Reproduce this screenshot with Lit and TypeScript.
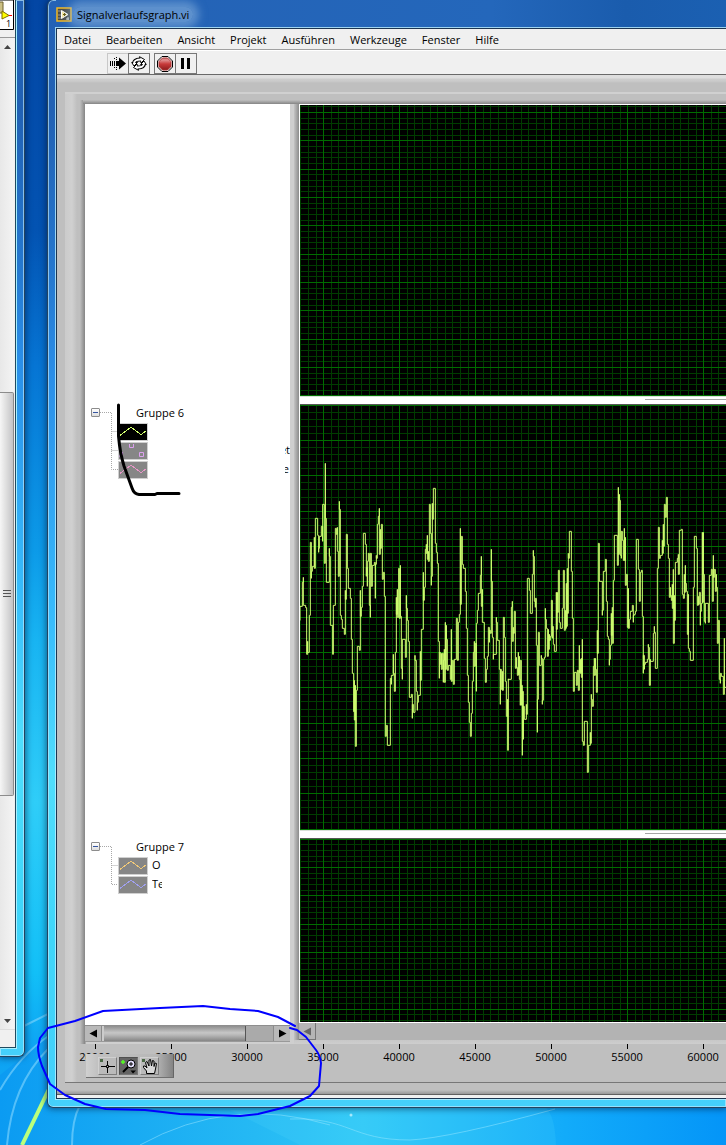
import { LitElement, html, svg, css } from "lit";
import { customElement, property } from "lit/decorators.js";

const MENU = ["Datei", "Bearbeiten", "Ansicht", "Projekt", "Ausführen", "Werkzeuge", "Fenster", "Hilfe"];
const TICKS = [20000, 25000, 30000, 35000, 40000, 45000, 50000, 55000, 60000];

// Sampled signal as stair steps, drawn at three units per pixel.
const TRACE_A =
  "M12 540V499H19V427H22V412V496H29V503H32V643H35V604V637H40V526H43V307H46V415V394H49V379H55V292V385H58V235H65V286H68V337V325H70V289H76V259H80V304V193H85V370H88V70V235H91V427H100V325V349H103V556H110V643H112V496H118V265H121V283H124V262V334H127V409H130V184V208H133V526H136V538H139V565H145V583H148V451V478H151V283H154V385H157V445H163V475H166V598H169V700H173V815H175V721V840H178V736V919H181V751H184V619H190V631H193V451V529H196V502H199V439H202V280H208V313H211V409V382H214V439V364H217V340H220V496H223V532V340H226V439H229V376H235V367H238V475V373H241V346V355H244V253H247V229H250V205V343H253V268V325H256V253H259V418H262V397H265V469H268V889H271V856H274V916H283V715H286V733V706H292V643V700H295V754H298V637H301V472V523H304V448V532H308V385H310V535H313V376V529H316V685H319V718V598H328V652H331V466V505H334V541H337V604H340V772H346V763H349V835V793H352V817H357V646V661H361V754H364V811V787H367V766H373V634V721H376V568H382V397V481H385V442H388V328H391V313V340H394V286V358H397V334V364H400V193H403V280H406V436V409H409V190V238H412V145H418V310H421V337H424V370H427V604H430V715V637H433V673H436V640V688H439V640H442V727V661H445V628V727H448V547V688H451V556V598H454V691H457V676H463V718H466V568V724H469V661H472V733H475V658H481V535H484V661H487V547H490V523H493V265V493H496V289H499V373H502V385H508V454H511V565H514V706H517V787H520V847H523V889H526V820H529V724H532V637H535V604V679H538V610H541V754V550H544V511H547V460H553V406H556V349V499H559V448V547H565V655H568V727H571V688H574V649H577V562H580V607V571H583V580H586V328V424H589V592H592V658V643H601V532V547H604V601H610V688H613V793V688H616V748H619V694V751H622V532H625V592H628V724H631V829H635V778V931H637V718";
const TRACE_B =
  "M7 718H16V502H19V484V604H22V562V580H25V514H28V685H31V652V682H34V706H37V637V703H40V649V718H43V796V661H46V796V736H49V946V754H52V898V799H55V838H61V793V823H64V415H70V451H73V520H79V403H82V331V349H85V484H88V502V475H91V616H94V877V778H97V577H100V676H106V646V655H109V793V781H112V658H115V652H118V505V538H121V565H124V649H127V568V628H130V583V601H133V589H136V481H139V595V559H142V613H145V634H151V457V568H154V457V517H157V391H160V547H163V565H169V505H172V391H175V571H178V511V565H181V430V559H184V385V520H187V340V355H190V274H196V394H199V535H202V754H205V697H211V736H214V691H217V751H220V616V697H223V658V700H226V655V712H229V598V904H232V916H235V844H244V997H247V916H253V877V910H256V763V778H259V799H262V679H265V655V706H268V655V688H271V757H274V571V640H277V310H280V424H289V526V511H292V394H298V358H301V484H304V589H307V598H310V676V658H313V616H316V520V586H319V502V610H322V421H325V286H334V376H337V142V343H340V163V181H343V346H346V355V274H349V301H352V361H355V265V361H358V292V436H361V403H364V562H367V445V565H370V538H373V514H379V496H382V547V526H385V523H388V514H391V298H397V388H400V484H403V397H406V391H409V529H412V700V646H415V688V673H418V667H424V658H427V613V622H430V736H433V658V664H442V580H445V559V577H448V685H454V385H457V262H460V355H463V346H469V301V340H472V253V319H475V193H478V232H481V172H484V313H487V355H490V472H493V442V466H496V481H499V433V505H502V388V610H505V466V541H508V367H514V355H517V343V403H520V271H526V268H529V463H532V475H535V403V457H538V376V430H541V454H544V583H547V463V625H550V634H553V661H562V442H565V289H571V325H574V496H577V469V493H580V457H583V556V514H586V490H589V277V487H592V277V403H595V544H598V550V490H607V547H610V406H616V388H619V484H622V346V412H625V388H628V454H631V403V442H634V610H637V541H640V718H643V730V700H646V709H652V763H655V595V742H660";

@customElement("plot-grid")
export class PlotGrid extends LitElement {
  @property({ type: Number }) offset = 7;
  @property({ type: Number }) major = 28.33;
  @property({ type: Boolean }) signal = false;

  static styles = css`
    :host { display: block; background: #000; overflow: hidden; min-height: 0; }
    .grid { display: block; width: 100%; height: 100%; shape-rendering: crispEdges; }
    .minor { stroke: #003c00; stroke-width: 1; fill: none; }
    .major { stroke: #006c00; stroke-width: 1; fill: none; }
    .trace { stroke: #d2ff70; stroke-width: 3; fill: none; stroke-linecap: square; }
  `;

  render() {
    let minor = "";
    let major = "";
    for (let k = -3; k < 320; k++) {
      const x = Math.ceil(23 + k * 7.6 - 0.3) + 0.5;
      if (k % 10 === 0) major += `M${x} 0V2000`;
      else minor += `M${x} 0V2000`;
    }
    for (let k = -5; k < 250; k++) {
      const y = Math.round(this.offset + (k * this.major) / 5) + 0.5;
      if (y < 0) continue;
      if (k % 5 === 0) major += `M0 ${y}H2600`;
      else minor += `M0 ${y}H2600`;
    }
    return html`<svg class="grid" aria-hidden="true">
      <path class="minor" d=${minor}></path>
      <path class="major" d=${major}></path>
      ${this.signal
        ? svg`<g transform="translate(-4 35) scale(.33333)"><path class="trace" d=${TRACE_A}/></g>
              <g transform="translate(206 35) scale(.33333)"><path class="trace" d=${TRACE_B}/></g>`
        : null}
    </svg>`;
  }
}

@customElement("app-root")
export class AppRoot extends LitElement {
  static styles = css`
    :host { display: block; font: 11px/15px "Open Sans", "Noto Sans", sans-serif; color: #000; }
    * { box-sizing: border-box; }
    button { font: inherit; color: inherit; margin: 0; padding: 0; border: 0; background: none; border-radius: 0; display: block; }
    svg { display: block; }
    .desktop {
      position: relative; min-height: 100vh; height: 100vh; overflow: hidden; display: flex; gap: 22px;
      background: linear-gradient(#0346a4 0, #0353b2 20%, #0675d4 32%, #0c9ae8 48%, #18b4f2 56%, #2fcdf8 70%, #12bff7 85%, #0da2f3 92%, #12aef4 100%);
    }
    .wallpaper { position: absolute; left: 0; bottom: 0; width: 100%; height: 200px; }
    .glass {
      position: relative; border: 1px solid #24435f;
      background: linear-gradient(#2462b6 0, #2161b4 10%, #2578cf 25%, #2a8ee8 34%, #38bcfc 56%, #50defd 70%, #3fd6fa 85%, #45d0fb 100%);
      box-shadow: 0 0 6px 1px rgba(0, 20, 50, .55), inset 0 0 0 1px rgba(190, 235, 255, .65);
    }
    .other { width: 25px; margin-bottom: 88px; border-left: 0; border-top: 0; border-radius: 0 0 6px 0; padding: 0 8px 8px 0; display: flex; }
    .other-body { flex: 1; display: flex; flex-direction: column; background: #f0f0f0; border: solid #1f4a60; border-width: 0 1px 1px 0; box-shadow: 1px 1px 0 #a8f0ff; overflow: hidden; }
    .conn { height: 38px; border-bottom: 1px solid #999; }
    .vscroll { flex: 1; width: 14px; min-height: 0; display: flex; flex-direction: column; align-items: stretch; background: linear-gradient(90deg, #e8e8e8, #f4f4f4); }
    .vstep { height: 17px; display: grid; place-items: center; }
    .vpad { flex: 338; }
    .vthumb { flex: 404; border: 1px solid #8c8c8c; border-left: 0; border-radius: 0 2px 2px 0; background: linear-gradient(90deg, #f6f6f6, #ddd 50%, #c3c3c6); display: grid; place-items: center; }
    .vpad2 { flex: 217; }
    .foot { height: 18px; border-top: 1px solid #ddd; }

    .window { flex: 1; min-width: 0; margin-bottom: 37px; border-top: 0; border-right: 0; border-radius: 6px 0 0 6px; padding: 0 0 8px 8px; display: flex; flex-direction: column; }
    .title { height: 28px; display: flex; align-items: center; gap: 5px; background: linear-gradient(90deg, #2462b5, #2467bb 65%, #1a5cad 85%, #1b60b2); }
    .title-text { padding: 0 4px; margin: 0 -4px; font-size: 11px; font-weight: 400; background: rgba(150, 190, 228, .5); border-radius: 8px; box-shadow: 0 0 8px 6px rgba(150, 190, 228, .5); }
    .client { flex: 1; min-height: 0; display: flex; flex-direction: column; border: solid #1c3550; border-width: 1px 0 1px 1px; background: #f0f0f0; box-shadow: 0 0 0 1px rgba(190, 240, 255, .8); overflow: hidden; }
    .menu { display: flex; gap: 15px; height: 21px; padding: 0 7px; align-items: center; border-bottom: 1px solid #a0a0a0; }
    .tools { display: flex; height: 25px; padding: 2px 0 0 51px; border-top: 1px solid #fff; border-bottom: 1px solid #696969; }
    .tool { width: 22px; height: 21px; border: 1px solid #777; display: grid; place-items: center; margin-left: -1px; }
    .tool.plain { border-color: #c8c8c8; border-right: 0; }
    .tool.first { margin-left: 4px; }
    .face { flex: 1; min-height: 0; display: flex; padding: 17px 0 11px 8px; background: linear-gradient(#dedede 0, #dedede 3px, #cdcdcd 4px, #cbcbcb 6px, #bfbfbf 8px, #bfbfbf calc(100% - 4px), #989898); border-bottom: 1px solid #606060; }
    .plate { flex: 1; min-width: 0; position: relative; display: flex; flex-direction: column; border-bottom: 1px solid #777;
      background: linear-gradient(#d0d0d0, #d0d0d0) 0 0 / 100% 2px no-repeat, linear-gradient(90deg, #cbcbcb 0, #d0d0d0 7px, #bfbfbf 12px); }
    .body { flex: 1; min-height: 0; margin: 8px 0 0 15px; display: grid; grid-template-columns: 214px 1fr; }
    .tree-frame { display: flex; flex-direction: column; padding: 4px 4px 2px 5px;
      background: linear-gradient(#bfbfbf, #858585 4px, transparent 4px) 3px 0 no-repeat, linear-gradient(90deg, #bfbfbf, #858585 5px, #cfcfcf 6px, #cfcfcf); }
    .tree { flex: 1; min-height: 0; display: grid; grid-template-rows: 300fr 434fr 187fr; background: #fff; }
    .group { grid-column: 1; position: relative; padding: 0 0 0 6px; overflow: hidden; }
    .six { grid-row: 2; }
    .seven { grid-row: 3; }
    .head { display: flex; align-items: center; height: 16px; gap: 36px; }
    .expand { width: 9px; height: 9px; border: 1px solid #8c8c8c; background: linear-gradient(#fff, #ddd); display: grid; place-items: center; border-radius: 1px; }
    .entries { display: flex; flex-direction: column; gap: 1px; padding: 3px 0 0 27px; }
    .entry { display: flex; align-items: center; gap: 4px; height: 18px; }
    .swatch { width: 30px; height: 18px; border: 1px solid #d0d0d0; background: #868686; }
    .swatch.dark { background: #000; }
    .frag { height: 15px; overflow: hidden; margin-top: -3px; }
    .cut { width: 10px; }
    .tail { width: 5px; margin-left: auto; display: flex; justify-content: flex-end; }
    .tail.end { width: 4px; margin-right: 1px; }
    .lines { position: absolute; left: 15px; top: 8px; }
    .hscroll { height: 17px; display: flex; background: #b4b4b4; border-top: 1px solid #8e8e8e; border-bottom: 1px solid #999; }
    .hstep { width: 17px; display: grid; place-items: center; background: #b9b9b9; border: solid #8b8b8b; border-width: 0 1px 0 0; }
    .hstep.right { border-width: 0 0 0 1px; }
    .hthumb { flex: 1; background: linear-gradient(#8e8e8e, #c6c6c6 45%, #b8b8b8 60%, #858585); border: solid #ccc; border-width: 0 0 0 2px; border-right: 1px solid #555; }
    .htrough { width: 27px; background: #aaa; }
    .graph { display: flex; flex-direction: column; min-width: 0; padding: 4px 0 4px 5px;
      background: linear-gradient(#c8c8c8, #cecece) 0 100% / 100% 4px no-repeat, linear-gradient(#bfbfbf, #858585 4px, transparent 4px), linear-gradient(90deg, #c4c4c4, #adadad 2px, #8c8c8c 5px); }
    .plots { flex: 1; min-height: 0; display: grid; grid-template-rows: 300fr 434fr 185fr; border: solid #fff; border-width: 0 0 0 1px; }
    .plot { display: flex; flex-direction: column; min-height: 0; min-width: 0; }
    .plot.top { border-top: 1px solid #fff; }
    .plot.next { border-top: 1px solid #555; }
    .plot.last { border-bottom: 1px solid #fff; }
    .plot > plot-grid { flex: 1; }
    .divider { height: 8px; background: #fff; border-top: 1px solid #d8e0d8; padding: 2px 0 0 345px; }
    .rule { height: 1px; background: #a6a6a6; }
    .gscroll { height: 17px; background: #b3b3b3; display: flex; }
    .gstep { width: 17px; display: grid; place-items: center; background: #b5b5b5; border: solid #777; border-width: 0 1px 1px 0; }
    .axis { display: flex; height: 38px; margin-left: -8px; overflow: hidden; }
    .tick { flex: 0 0 76px; display: flex; flex-direction: column; align-items: center; }
    .mark { width: 1px; height: 5px; background: #000; }
    .palette { position: absolute; left: 21px; bottom: 4px; width: 88px; height: 24px; padding: 3px 0 0 12px; display: flex; gap: 2px; border-bottom: 1px solid #707070; border-right: 1px solid #666; background: linear-gradient(90deg, #d0d0d0, #bfbfbf 15%, #b8b8b8 80%, #848484); }
    .pick { width: 19px; height: 18px; border: 1px solid #d0d0d0; border-right-color: #7d7d7d; border-bottom-color: #7d7d7d; background: #bababa; }
    .pick.on { background: #646464; border-color: #505050 #777 #777 #505050; }
    .strip { height: 3px; }
    .ink { position: absolute; left: 0; top: 0; width: 100%; height: 100%; pointer-events: none; }
  `;

  private zig(color: string) {
    return html`<svg width="28" height="16" fill="none" stroke=${color} shape-rendering="crispEdges" aria-hidden="true"><path d="M1 11.500L12 3L22 10.500L27 7"></path></svg>`;
  }

  private arrow(left: boolean, color = "#000") {
    return html`<svg width="9" height="9" fill=${color} aria-hidden="true"><path d=${left ? "M8 .5V8.500L.5 4.500Z" : "M1 .5V8.500L8.500 4.500Z"}></path></svg>`;
  }

  private head(name: string) {
    return html`<div class="head">
      <button class="expand" aria-label="${name} reduzieren"><svg width="7" height="7" stroke="#3555a0" aria-hidden="true"><path d="M1 3.500H6"></path></svg></button>
      <span>${name}</span>
    </div>`;
  }

  render() {
    return html`
      <div class="desktop">
        <svg class="wallpaper" viewBox="0 0 726 200" preserveAspectRatio="none" fill="none" aria-hidden="true">
          <defs>
            <linearGradient id="sky"><stop offset="0" stop-color="#0b9bf2"></stop><stop offset=".35" stop-color="#25b9f4"></stop><stop offset=".5" stop-color="#30c8f6"></stop><stop offset=".78" stop-color="#12abfa"></stop><stop offset="1" stop-color="#0495f8"></stop></linearGradient>
          </defs>
          <path d="M0 130L50 90H726V200H0Z" fill="url(#sky)"></path>
          <path d="M0 145Q20 110 50 90M7 200Q12 140 48 104M72 200Q72 175 80 160M22 82L58 64" stroke="#8fdcff" stroke-width="2" opacity=".55"></path>
          <path d="M22 200L50 142" stroke="#baff7c" stroke-width="4"></path>
          <path d="M140 200Q230 150 330 180M290 174C350 172 350 195 410 195Q450 193 555 164" stroke="#9fe8ff" opacity=".5"></path>
          <path d="M545 162Q555 170 556 200H300L230 165Z" fill="#6fe8ff" opacity=".12"></path>
          <circle cx="351" cy="170" r="1.500" fill="#a8ecff"></circle>
        </svg>

        <aside class="glass other">
          <div class="other-body">
            <div class="conn">
              <svg width="14" height="37" aria-hidden="true">
                <path d="M0 0H13.500V29.500H0" fill="#fff" stroke="#000"></path>
                <path d="M0 2H3V13H0" fill="#cbbf83" stroke="#6c602e"></path>
                <path d="M2 11L9 15.500L2 19Z" fill="#ff0" stroke="#806e00"></path>
                <path d="M9 15.500H12" stroke="#f00"></path>
                <text x="6" y="27" font-size="9">1</text>
              </svg>
            </div>
            <div class="vscroll">
              <button class="vstep" aria-label="Nach oben"><svg width="7" height="4" fill="#444"><path d="M0 4L3.500 0L7 4Z"></path></svg></button>
              <div class="vpad"></div>
              <div class="vthumb"><svg width="8" height="8" stroke="#555"><path d="M0 .5H8M0 3.500H8M0 6.500H8"></path></svg></div>
              <div class="vpad2"></div>
              <button class="vstep" aria-label="Nach unten"><svg width="7" height="4" fill="#444"><path d="M0 0L3.500 4L7 0Z"></path></svg></button>
            </div>
            <div class="foot"></div>
          </div>
        </aside>

        <main class="glass window">
          <header class="title">
            <svg width="16" height="15" aria-hidden="true">
              <rect x="1" y="1" width="14" height="13" fill="#4a4a44" stroke="#f4bb24" stroke-width="1.500"></rect>
              <path d="M2 4H5M2 8H5M2 11H5" stroke="#999"></path>
              <path d="M5.500 3.500L12 7.500L5.500 11.500Z" fill="#fbe9a0" stroke="#fff"></path>
              <path d="M7 7.500H10M8.500 6V9" stroke="#665500"></path>
              <path d="M10 12H13M12 10V13" stroke="#ddd"></path>
            </svg>
            <h1 class="title-text">Signalverlaufsgraph.vi</h1>
          </header>
          <div class="client">
            <nav class="menu">${MENU.map((m) => html`<button>${m}</button>`)}</nav>
            <div class="tools">
              <button class="tool plain" aria-label="Ausführen">
                <svg width="17" height="15"><path d="M.5 5V10M2.500 5V10M4.500 5V10" stroke="#000"></path><path d="M6 5H9V1.500L16 7.500L9 13.500V10H6Z"></path><path d="M6.500 1V4M6.500 11V14M4.500 2V4M4.500 11V13" stroke="#000" stroke-dasharray="1 1"></path></svg>
              </button>
              <button class="tool" aria-label="Wiederholt ausführen">
                <svg width="16" height="15" fill="none" stroke-linejoin="round">
                  <path d="M3 8C3 4.500 5 3.500 9 3.500M13 7C13 10.500 11 11.500 7 11.500" stroke="#000" stroke-width="4"></path>
                  <path d="M8.500 .7L13.500 3.500L10 7ZM7.500 14.300L2.500 11.500L6 8ZM.7 6.500H6.500L3 10ZM9.500 8.500L13 5L15.300 8.500Z" fill="#fff" stroke="#000"></path>
                  <path d="M3 8C3 4.500 5 3.500 10 3.500M13 7C13 10.500 11 11.500 6 11.500" stroke="#fff" stroke-width="2"></path>
                </svg>
              </button>
              <button class="tool first" aria-label="Abbrechen">
                <svg width="16" height="16"><defs><linearGradient id="stop" x2="0" y2="1"><stop offset=".2" stop-color="#dd8888"></stop><stop offset=".5" stop-color="#c83a3a"></stop><stop offset="1" stop-color="#8c1c1c"></stop></linearGradient></defs><path d="M5 .5H11L15.500 5V11L11 15.500H5L.5 11V5Z" fill="#fff" stroke="#000"></path><path d="M5.500 2H10.500L14 5.500V10.500L10.500 14H5.500L2 10.500V5.500Z" fill="url(#stop)" stroke="#a33"></path></svg>
              </button>
              <button class="tool" aria-label="Pause">
                <svg width="10" height="11"><path d="M0 0H3V11H0ZM6 0H9V11H6Z"></path></svg>
              </button>
            </div>

            <div class="face">
              <div class="plate">
                <div class="body">
                  <div class="tree-frame">
                    <div class="tree">
                      <section class="group six">
                        ${this.head("Gruppe 6")}
                        <svg class="lines" width="19" height="60" fill="none" stroke="#a8a8a8" stroke-dasharray="1 1"><path d="M0 .5H11.500V57.500H18M11.500 19.500H18M11.500 38.500H18"></path></svg>
                        <div class="entries">
                          <div class="entry"><span class="swatch dark">${this.zig("#d2ff70")}</span></div>
                          <div class="entry">
                            <span class="swatch"><svg width="28" height="16" fill="none" stroke="#dda0f0"><path d="M10.500 1V4.500H14.500V1M20.500 9.500H24.500V13.500H20.500ZM3.500 9V13H0"></path></svg></span>
                            <span class="frag tail">et</span>
                          </div>
                          <div class="entry"><span class="swatch">${this.zig("#e896c8")}</span><span class="frag tail end">e</span></div>
                        </div>
                      </section>
                      <section class="group seven">
                        ${this.head("Gruppe 7")}
                        <svg class="lines" width="19" height="42" fill="none" stroke="#a8a8a8" stroke-dasharray="1 1"><path d="M0 .5H11.500V38.500H18M11.500 19.500H18"></path></svg>
                        <div class="entries">
                          <div class="entry"><span class="swatch">${this.zig("#f0c878")}</span><span class="frag">O</span></div>
                          <div class="entry"><span class="swatch">${this.zig("#a0a0f0")}</span><span class="frag cut">Te</span></div>
                        </div>
                      </section>
                    </div>
                    <div class="hscroll">
                      <button class="hstep" aria-label="Nach links">${this.arrow(true)}</button>
                      <div class="hthumb"></div>
                      <div class="htrough"></div>
                      <button class="hstep right" aria-label="Nach rechts">${this.arrow(false)}</button>
                    </div>
                  </div>

                  <div class="graph">
                    <div class="plots">
                      <div class="plot top"><plot-grid .offset=${7}></plot-grid><div class="divider"><div class="rule"></div></div></div>
                      <div class="plot next"><plot-grid .offset=${35} .major=${35.33} signal></plot-grid><div class="divider"><div class="rule"></div></div></div>
                      <div class="plot next last"><plot-grid .offset=${28}></plot-grid></div>
                    </div>
                    <div class="gscroll"><button class="gstep" aria-label="Graph nach links">${this.arrow(true, "#666")}</button></div>
                  </div>
                </div>
                <div class="axis">
                  ${TICKS.map((t) => html`<div class="tick"><span class="mark"></span><span>${t}</span></div>`)}
                </div>
                <div class="palette">
                  <button class="pick" aria-label="Cursor"><svg width="17" height="16" fill="none" stroke="#000"><path d="M2 8.500H7M10 8.500H16M8.500 3V7M8.500 10V15M7.500 7.500H9.500V9.500H7.500Z"></path><path d="M1 2.500H4" stroke="#4a6844" stroke-width="3"></path></svg></button>
                  <button class="pick on" aria-label="Zoom"><svg width="17" height="16" fill="none" stroke="#000"><circle cx="11" cy="6" r="4" fill="#e6e2ff"></circle><path d="M9 6H13M11 4V8"></path><path d="M8 9L3 14" stroke-width="2"></path><path d="M10.500 12.500H16L13 15.500Z" fill="#000" stroke="none"></path><path d="M1 4H5M3 2V6" stroke="#5f2" stroke-width="1.500"></path></svg></button>
                  <button class="pick" aria-label="Verschieben"><svg width="17" height="16" fill="#d8d8d8" stroke="#000"><path d="M5.500 15.500V13L2.500 9.500V8H4L6 10L4.500 4.500L6 3.500L8 8V2L9.500 1.500L10.500 8L11.500 2.500L13 3V8.500L14 5L15.500 5.500L14.500 11L13.500 15.500Z"></path><path d="M1 2.500H4" stroke="#4a6844" stroke-width="3"></path></svg></button>
                </div>
              </div>
            </div>
            <div class="strip"></div>
          </div>
        </main>

        <svg class="ink" fill="none" stroke-linecap="round" stroke-linejoin="round" aria-hidden="true">
          <path d="M118.500 405V436Q120 453 124 466L132 488Q134 494 139 494.500H155L157 493.500H179" stroke="#000" stroke-width="3"></path>
          <path d="M295 1026L278 1017L258 1011L230 1009L203 1006L160 1008L103 1011L75 1021L48 1028L40 1038L38 1047Q38 1055 42 1066L50 1084L65 1095L85 1104L106 1109L145 1110L180 1114L240 1116L258 1114L290 1106L310 1096L319 1086L321 1063Q320 1055 316 1050L306 1037L297 1030L290 1028" stroke="#0000ff" stroke-width="2"></path>
        </svg>
      </div>
    `;
  }
}
